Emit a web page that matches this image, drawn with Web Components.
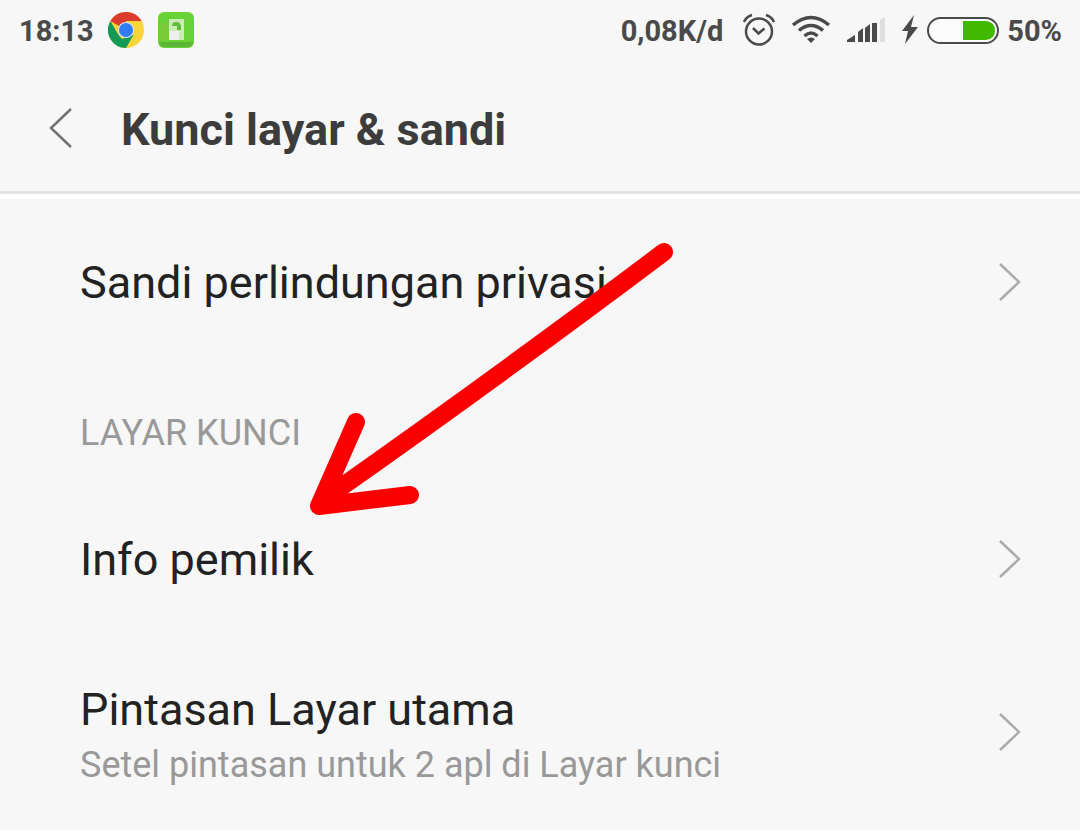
<!DOCTYPE html>
<html lang="id">
<head>
<meta charset="utf-8">
<meta name="viewport" content="width=device-width, initial-scale=1">
<title>Kunci layar &amp; sandi</title>
<style>
  body { margin: 0; background: #f7f7f7; font-family: Roboto, "Noto Sans", sans-serif; color: #222; }
</style>
</head>
<body>
<settings-page></settings-page>

<template id="status-bar">
  <style>
    :host { display: flex; align-items: center; justify-content: space-between; height: 60px; padding: 0 18px 0 19px; box-sizing: border-box; color: #4a4a4a; font-size: 29px; line-height: 32px; font-weight: 700; }
    div { display: flex; align-items: center; }
    svg { display: block; flex: none; }
    time, span { padding-top: 2px; }
    .left { gap: 14px; }
    .right { gap: 15px; }
    .speed { padding-right: 4px; }
    .power { gap: 8px; }
  </style>
  <div class="left">
    <time>18:13</time>
    <svg width="36" height="36" viewBox="0 0 36 36" role="img" aria-label="Chrome">
      <circle cx="18" cy="18" r="18" fill="#f9d43a"/>
      <path d="M18 18 2.4 9A18 18 0 0 1 33.6 9H18Z" fill="#dc3b2f"/>
      <path d="M2.4 9 10.2 22.5 14 27 25.8 22.5 18 36A18 18 0 0 1 2.4 9Z" fill="#159957"/>
      <circle cx="18" cy="18" r="8" fill="#dbe6f4"/>
      <circle cx="18" cy="18" r="7" fill="#2f7df0"/>
    </svg>
    <svg width="36" height="36" viewBox="0 0 36 36" role="img" aria-label="Kunci">
      <rect width="36" height="36" rx="6" fill="#68d236"/>
      <path d="M1 30h34q-1 5-6 5H7q-5 0-6-5Z" fill="#5cb535"/>
      <path d="M3 11h7v17H3Z" fill="#7dcb3a"/>
      <path d="M11 7h15v21H11Z" fill="#c9edb5"/><path d="M11 19h10v9H11Z" fill="#eee"/>
      <path d="M14 14q0-4 4-4 5 0 5 5v3h-4v-4Z" fill="#62ba3a"/>
    </svg>
  </div>
  <div class="right">
    <span class="speed">0,08K/d</span>
    <svg width="34" height="34" viewBox="0 0 34 34" fill="none" stroke="#4a4a4a" stroke-width="2.5" role="img" aria-label="Alarm">
      <circle cx="17" cy="18.5" r="13"/><path d="m11 15 5.500 5.500 6-5M2 9q2-5 8-7M32 9q-2-5-8-7" />
    </svg>
    <svg width="40" height="30" viewBox="0 0 40 30" fill="none" stroke="#4a4a4a" stroke-width="3.500" role="img" aria-label="Wi-Fi">
      <path d="M2 10Q20-5 38 10M8 15.500Q20 5.500 32 15.500M13.500 21Q20 15 26.500 21"/><path d="m20 28-4-4q4-3 8 0Z" fill="#4a4a4a" stroke="none"/>
    </svg>
    <svg width="40" height="26" viewBox="0 0 40 26" role="img" aria-label="Sinyal">
      <path d="M1 25v-2l8-5v7ZM12 25V15l5-4v14ZM19 25V11l5-4v18ZM26 25V6h5v19Z" fill="#4a4a4a"/><path d="M34 25V3l5-3v25Z" fill="#dedede"/>
    </svg>
    <div class="power">
      <svg width="18" height="30" viewBox="0 0 18 30" role="img" aria-label="Mengisi daya"><path d="M13 0 1 16h6L4 29 17 12h-7Z" fill="#4a4a4a"/></svg>
      <svg width="72" height="27" viewBox="0 0 72 27" role="img" aria-label="Baterai">
        <rect x="1" y="1" width="70" height="25" rx="12.500" fill="#fbfbfb" stroke="#4a4a4a" stroke-width="2"/>
        <path d="M36 4h23q9 1 9 9.500T59 23H36Z" fill="#3fba00"/>
      </svg>
      <span>50%</span>
    </div>
  </div>
</template>

<template id="page-header">
  <style>
    :host { display: flex; align-items: center; gap: 38px; height: 139px; padding: 2px 40px 0 39px; box-sizing: border-box; border-bottom: 5px solid #fff; box-shadow: inset 0 -3px #e3e3e3; }
    button { display: grid; place-items: center; width: 44px; height: 56px; padding: 0; border: 0; background: none; }
    h1 { margin: 0; padding-top: 4px; color: #3c3c3c; font-size: 45px; line-height: 56px; font-weight: 700; }
  </style>
  <button type="button" aria-label="Kembali"><svg width="24" height="44" viewBox="0 0 24 44" fill="none" stroke="#737373" stroke-width="2.500"><path d="M22 3 2 22 22 41"/></svg></button>
  <h1><slot></slot></h1>
</template>

<template id="setting-row">
  <style>
    :host { display: block; }
    a { display: flex; align-items: center; justify-content: space-between; min-height: var(--row-height, 164px); padding: 0 58px 0 80px; box-sizing: border-box; color: #222; text-decoration: none; }
    .label { padding-top: var(--label-inset, 2px); }
    .title { display: block; font-size: 45px; line-height: 56px; }
    ::slotted([slot="detail"]) { display: block; color: #999; font-size: 36px; line-height: 54px; }
    svg { flex: none; }
  </style>
  <a href="#"><span class="label"><span class="title"><slot></slot></span><slot name="detail"></slot></span>
    <svg width="24" height="40" viewBox="0 0 24 40" fill="none" stroke="#ababab" stroke-width="2.500" aria-hidden="true"><path d="M2 2 21 20 2 38"/></svg></a>
</template>

<template id="section-title">
  <style>
    :host { display: block; padding: 45px 80px 20px; }
    h2 { margin: 0; color: #999; font-size: 36px; line-height: 48px; font-weight: 400; }
  </style>
  <h2><slot></slot></h2>
</template>

<template id="pointer-arrow">
  <style>
    :host { position: absolute; left: 309px; top: 241px; pointer-events: none; }
    svg { display: block; }
  </style>
  <svg width="366" height="276" viewBox="309 241 366 276" fill="none" stroke="#fa0000" stroke-width="18" stroke-linecap="round" stroke-linejoin="round" aria-hidden="true">
    <path d="M664 252Q510 368 330 495M356 422 319 506 410 495"/>
  </svg>
</template>

<template id="settings-page">
  <style>
    :host { display: block; position: relative; }
    main { padding-top: 1px; }
    .tall { --row-height: 182px; --label-inset: 10px; }
  </style>
  <status-bar></status-bar>
  <page-header>Kunci layar &amp; sandi</page-header>
  <main>
    <setting-row>Sandi perlindungan privasi</setting-row>
    <section-title>LAYAR KUNCI</section-title>
    <setting-row>Info pemilik</setting-row>
    <setting-row class="tall">Pintasan Layar utama<span slot="detail">Setel pintasan untuk 2 apl di Layar kunci</span></setting-row>
  </main>
  <pointer-arrow></pointer-arrow>
</template>

<script>
  class TemplateElement extends HTMLElement {
    constructor() {
      super();
      const template = document.getElementById(this.localName);
      this.attachShadow({ mode: "open" }).append(document.importNode(template.content, true));
    }
  }
  class StatusBar extends TemplateElement {}
  class PageHeader extends TemplateElement {}
  class SettingRow extends TemplateElement {}
  class SectionTitle extends TemplateElement {}
  class PointerArrow extends TemplateElement {}
  class SettingsPage extends TemplateElement {}
  customElements.define("status-bar", StatusBar);
  customElements.define("page-header", PageHeader);
  customElements.define("setting-row", SettingRow);
  customElements.define("section-title", SectionTitle);
  customElements.define("pointer-arrow", PointerArrow);
  customElements.define("settings-page", SettingsPage);
</script>
</body>
</html>
